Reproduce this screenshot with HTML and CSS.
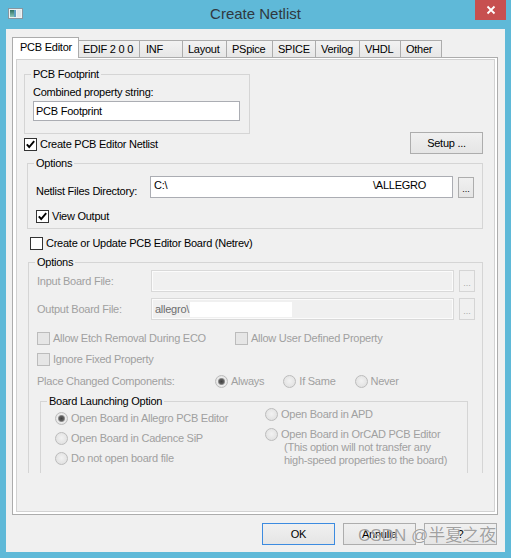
FILE: index.html
```html
<!DOCTYPE html>
<html>
<head>
<meta charset="utf-8">
<title>Create Netlist</title>
<link rel="stylesheet" href="styles.css">
</head>
<body>
<div class="window">
  <div class="titlebar">
    <svg class="app-icon" width="15" height="11" viewBox="0 0 15 11">
      <defs>
        <linearGradient id="ig" x1="0" y1="0" x2="0" y2="1">
          <stop offset="0" stop-color="#2f6f62"/>
          <stop offset="1" stop-color="#8cc7b8"/>
        </linearGradient>
      </defs>
      <rect x="0.5" y="0.5" width="14" height="10" fill="#eef2f3" stroke="#8796a0"/>
      <rect x="2" y="2" width="4" height="7" fill="url(#ig)"/>
      <rect x="6" y="2" width="2" height="7" fill="#5f9fc4"/>
      <rect x="9" y="2" width="4" height="7" fill="#dfe6ea"/>
    </svg>
    <div class="title">Create Netlist</div>
    <div class="close">
      <svg width="10" height="10" viewBox="0 0 10 10"><path d="M1.5 1.5L8.5 8.5M8.5 1.5L1.5 8.5" stroke="#fff" stroke-width="1.8"/></svg>
    </div>
  </div>

  <div class="client">
    <div class="tabs">
      <div class="tab active">PCB Editor</div>
      <div class="tab">EDIF 2 0 0</div>
      <div class="tab">INF</div>
      <div class="tab">Layout</div>
      <div class="tab">PSpice</div>
      <div class="tab">SPICE</div>
      <div class="tab">Verilog</div>
      <div class="tab">VHDL</div>
      <div class="tab">Other</div>
    </div>

    <div class="panel">
      <div class="page">

        <div class="group g-footprint">
          <div class="legend">PCB Footprint</div>
          <div class="g-label">Combined property string:</div>
          <div class="input in-footprint">PCB Footprint</div>
        </div>

        <div class="row-netlist">
          <div class="opt netlist-opt">
            <span class="cb"><svg width="11" height="11" viewBox="0 0 11 11"><path d="M1.8 5.4L4.2 8L9.2 2.2" fill="none" stroke="#000" stroke-width="1.9"/></svg></span>
            <span>Create PCB Editor Netlist</span>
          </div>
          <button class="btn">Setup ...</button>
        </div>

        <div class="group g-options1">
          <div class="legend">Options</div>
          <div class="field dir-row">
            <span class="field-label">Netlist Files Directory:</span>
            <div class="input in-dir"><span class="dir-a">C:\</span><span class="dir-b">\ALLEGRO</span></div>
            <button class="browse">...</button>
          </div>
          <div class="opt view-output">
            <span class="cb"><svg width="11" height="11" viewBox="0 0 11 11"><path d="M1.8 5.4L4.2 8L9.2 2.2" fill="none" stroke="#000" stroke-width="1.9"/></svg></span>
            <span>View Output</span>
          </div>
        </div>

        <div class="opt netrev">
          <span class="cb"></span>
          <span>Create or Update PCB Editor Board (Netrev)</span>
        </div>

        <div class="group g-options2">
          <div class="legend">Options</div>
          <div class="field board-row">
            <span class="field-label dim">Input Board File:</span>
            <div class="input disabled"></div>
            <button class="browse disabled">...</button>
          </div>
          <div class="field board-row out-row">
            <span class="field-label dim">Output Board File:</span>
            <div class="input disabled in-out"><span class="val">allegro\</span><span class="redact"></span></div>
            <button class="browse disabled">...</button>
          </div>
          <div class="cb-row etch-row">
            <div class="opt dim etch"><span class="cb dis"></span><span>Allow Etch Removal During ECO</span></div>
            <div class="opt dim"><span class="cb dis"></span><span>Allow User Defined Property</span></div>
          </div>
          <div class="cb-row ignore-row">
            <div class="opt dim"><span class="cb dis"></span><span>Ignore Fixed Property</span></div>
          </div>
          <div class="place-row">
            <span class="place-label dim">Place Changed Components:</span>
            <div class="radios">
              <div class="opt dim"><span class="radio on"></span><span>Always</span></div>
              <div class="opt dim"><span class="radio"></span><span>If Same</span></div>
              <div class="opt dim"><span class="radio"></span><span>Never</span></div>
            </div>
          </div>

          <div class="group g-launch">
            <div class="legend">Board Launching Option</div>
            <div class="launch-cols">
              <div class="col-left">
                <div class="opt dim lrow"><span class="radio on"></span><span>Open Board in Allegro PCB Editor</span></div>
                <div class="opt dim lrow"><span class="radio"></span><span>Open Board in Cadence SiP</span></div>
                <div class="opt dim lrow"><span class="radio"></span><span>Do not open board file</span></div>
              </div>
              <div class="col-right">
                <div class="opt dim lrow"><span class="radio"></span><span>Open Board in APD</span></div>
                <div class="opt dim lrow"><span class="radio"></span><span>Open Board in OrCAD PCB Editor</span></div>
                <div class="note dim">(This option will not transfer any<br>high-speed properties to the board)</div>
              </div>
            </div>
          </div>
        </div>

      </div>
    </div>

    <div class="buttons">
      <button class="btn default">OK</button>
      <button class="btn">Annulla</button>
      <button class="btn">?</button>
    </div>
  </div>

  <div class="watermark">CSDN @半夏之夜</div>
</div>
</body>
</html>
```
FILE: styles.css
```css
* { box-sizing: border-box; }

body {
  margin: 0;
  font-family: "Liberation Sans", Arial, sans-serif;
  font-size: 11px;
  letter-spacing: -0.25px;
  color: #000;
  background: #5fb9d8;
}

.window {
  width: 511px;
  height: 558px;
  background: #5fb9d8;
  position: relative;
  display: flex;
  flex-direction: column;
}

/* ---------- title bar ---------- */
.titlebar {
  height: 29px;
  flex: none;
  display: grid;
  grid-template-columns: 1fr auto 1fr;
  align-items: start;
}
.app-icon { display: block; margin: 8px 0 0 8px; }
.title {
  font-size: 15px;
  letter-spacing: 0;
  line-height: 28px;
  color: #303840;
}
.close {
  justify-self: end;
  width: 31px;
  height: 20px;
  margin-right: 5px;
  background: #c75050;
  display: flex;
  align-items: center;
  justify-content: center;
}

/* ---------- client ---------- */
.client {
  margin: 0 6px;
  height: 523px;
  background: #f0f0f0;
  display: flex;
  flex-direction: column;
}

.tabs {
  display: flex;
  align-items: flex-end;
  height: 21px;
  margin-top: 8px;
  padding-left: 6px;
}
.tab {
  height: 18px;
  border: 1px solid #acacac;
  border-bottom: none;
  margin-left: -1px;
  padding-left: 5px;
  line-height: 16px;
  background: linear-gradient(#f2f2f2, #e6e6e6);
  white-space: nowrap;
  flex: none;
}
.tab.active {
  height: 21px;
  margin-left: 0;
  padding-left: 7px;
  line-height: 19px;
  background: #fff;
  position: relative;
  z-index: 1;
}
.tab:nth-child(1) { width: 67px; }
.tab:nth-child(2) { width: 62px; padding-left: 4px; }
.tab:nth-child(3) { width: 44px; padding-left: 6px; }
.tab:nth-child(4) { width: 45px; }
.tab:nth-child(5) { width: 47px; }
.tab:nth-child(6) { width: 44px; }
.tab:nth-child(7) { width: 45px; }
.tab:nth-child(8) { width: 42px; }
.tab:nth-child(9) { width: 42px; }

.panel {
  margin: -1px 0 0 6px;
  width: 486px;
  height: 458px;
  border: 1px solid #acacac;
  background: #fff;
  padding: 1px 2px 2px 3px;
  display: flex;
  flex: none;
}
.page {
  flex: 1;
  background: #f0f0f0;
  border: 1px solid #d2d2d2;
}

/* ---------- group boxes ---------- */
.group { border: 1px solid #d5d5d5; }
.legend {
  display: table;
  margin: -7px 0 0 6px;
  padding: 0 2px;
  line-height: 13px;
  background: #f0f0f0;
  color: #000;
}

.g-footprint {
  margin: 14px 0 0 7px;
  width: 226px;
  height: 60px;
}
.g-label { margin: 5px 0 0 8px; line-height: 13px; }

.input {
  border: 1px solid #abadb3;
  background: #fff;
  flex: none;
}
.in-footprint {
  margin: 2px 0 0 8px;
  width: 207px;
  height: 20px;
  padding-left: 2px;
  line-height: 18px;
}

.row-netlist {
  display: flex;
  align-items: center;
  justify-content: space-between;
  height: 22px;
  margin: -2px 11px 0 7px;
}
.netlist-opt { margin-top: 3px; }

.opt {
  display: flex;
  align-items: center;
  gap: 3px;
  line-height: 13px;
  white-space: nowrap;
}
.cb {
  width: 13px;
  height: 13px;
  border: 1px solid #333;
  background: #fff;
  flex: none;
  display: flex;
  align-items: center;
  justify-content: center;
}
.cb svg { display: block; }
.cb.dis { border-color: #bcbcbc; background: #e6e6e6; }

.radio {
  width: 13px;
  height: 13px;
  border-radius: 50%;
  border: 1px solid #bcbcbc;
  background: radial-gradient(circle at 50% 45%, #f2f2f2 0, #e2e2e2 6px);
  flex: none;
}
.radio.on {
  background: radial-gradient(circle at 50% 50%, #3f3f3f 0, #606060 2.4px, #9a9a9a 3.2px, #ececec 4px, #e2e2e2 6px);
}

.dim { color: #a0a0a0; }

.btn {
  width: 73px;
  height: 22px;
  padding: 0;
  border: 1px solid #adadad;
  background: linear-gradient(#f0f0f0, #e5e5e5);
  font: inherit;
  letter-spacing: inherit;
  color: #000;
  display: flex;
  align-items: center;
  justify-content: center;
  flex: none;
}
.btn.default { border-color: #3c8be0; }

.g-options1 {
  margin: 9px 0 0 10px;
  width: 456px;
  height: 66px;
}
.field {
  display: flex;
  margin-left: 8px;
}
.field-label {
  width: 114px;
  flex: none;
  line-height: 13px;
}
.dir-row {
  margin-top: 6px;
  align-items: flex-end;
}
.in-dir {
  width: 303px;
  height: 22px;
  padding: 2px 0 0 3px;
  line-height: 13px;
  display: flex;
  overflow: hidden;
  white-space: nowrap;
}
.dir-a { width: 219px; flex: none; }
.browse {
  width: 16px;
  height: 21px;
  margin-left: 5px;
  padding: 0 0 3px;
  border: 1px solid #adadad;
  background: linear-gradient(#f0f0f0, #e5e5e5);
  font: inherit;
  font-size: 9px;
  letter-spacing: 0;
  line-height: 9px;
  display: flex;
  align-items: flex-end;
  justify-content: center;
  flex: none;
  color: #000;
}
.browse.disabled {
  border-color: #d5d5d5;
  background: #f0f0f0;
  color: #a8a8a8;
}
.view-output { margin: 12px 0 0 8px; }

.netrev { margin: 8px 0 0 13px; }

.g-options2 {
  margin: 12px 0 0 11px;
  width: 455px;
  height: 211px;
  border-bottom: none;
}
.board-row {
  margin-top: 1px;
  align-items: center;
}
.board-row .input.disabled {
  width: 303px;
  height: 22px;
}
.board-row .browse { height: 22px; }
.input.disabled {
  border-color: #d9d9d9;
  background: #f0f0f0;
  box-shadow: inset 0 0 0 1px #fbfbfb;
}
.out-row { margin-top: 6px; }
.in-out {
  display: flex;
  align-items: center;
  padding-left: 3px;
  color: #6d6d6d;
  line-height: 13px;
}
.redact {
  display: block;
  width: 102px;
  height: 15px;
  background: #fff;
  margin-left: 1px;
}

.cb-row {
  display: flex;
  margin-left: 8px;
}
.etch-row { margin-top: 12px; }
.etch { width: 198px; flex: none; }
.ignore-row { margin-top: 8px; }

.place-row {
  display: flex;
  align-items: center;
  margin: 9px 0 0 8px;
  line-height: 13px;
}
.place-label { width: 178px; flex: none; }
.radios { display: flex; gap: 19px; }

.g-launch {
  margin: 13px 0 0 11px;
  width: 428px;
  height: 72px;
  border-bottom: none;
}
.launch-cols { display: flex; }
.col-left {
  width: 210px;
  margin-left: 14px;
  flex: none;
}
.col-right { margin-top: -4px; }
.lrow { height: 20px; }
.note {
  margin: -3px 0 0 19px;
  line-height: 13px;
  white-space: nowrap;
}

/* ---------- bottom buttons ---------- */
.buttons {
  display: flex;
  justify-content: flex-end;
  gap: 8px;
  margin-top: 8px;
  padding-right: 8px;
}

.watermark {
  position: absolute;
  left: 358px;
  top: 524px;
  font-family: "Liberation Sans", "Noto Sans CJK SC", sans-serif;
  font-size: 17px;
  line-height: 24px;
  letter-spacing: 0;
  color: rgba(120, 120, 120, 0.7);
  text-shadow: 0 0 1px rgba(255, 255, 255, 0.9);
  white-space: nowrap;
}
```
